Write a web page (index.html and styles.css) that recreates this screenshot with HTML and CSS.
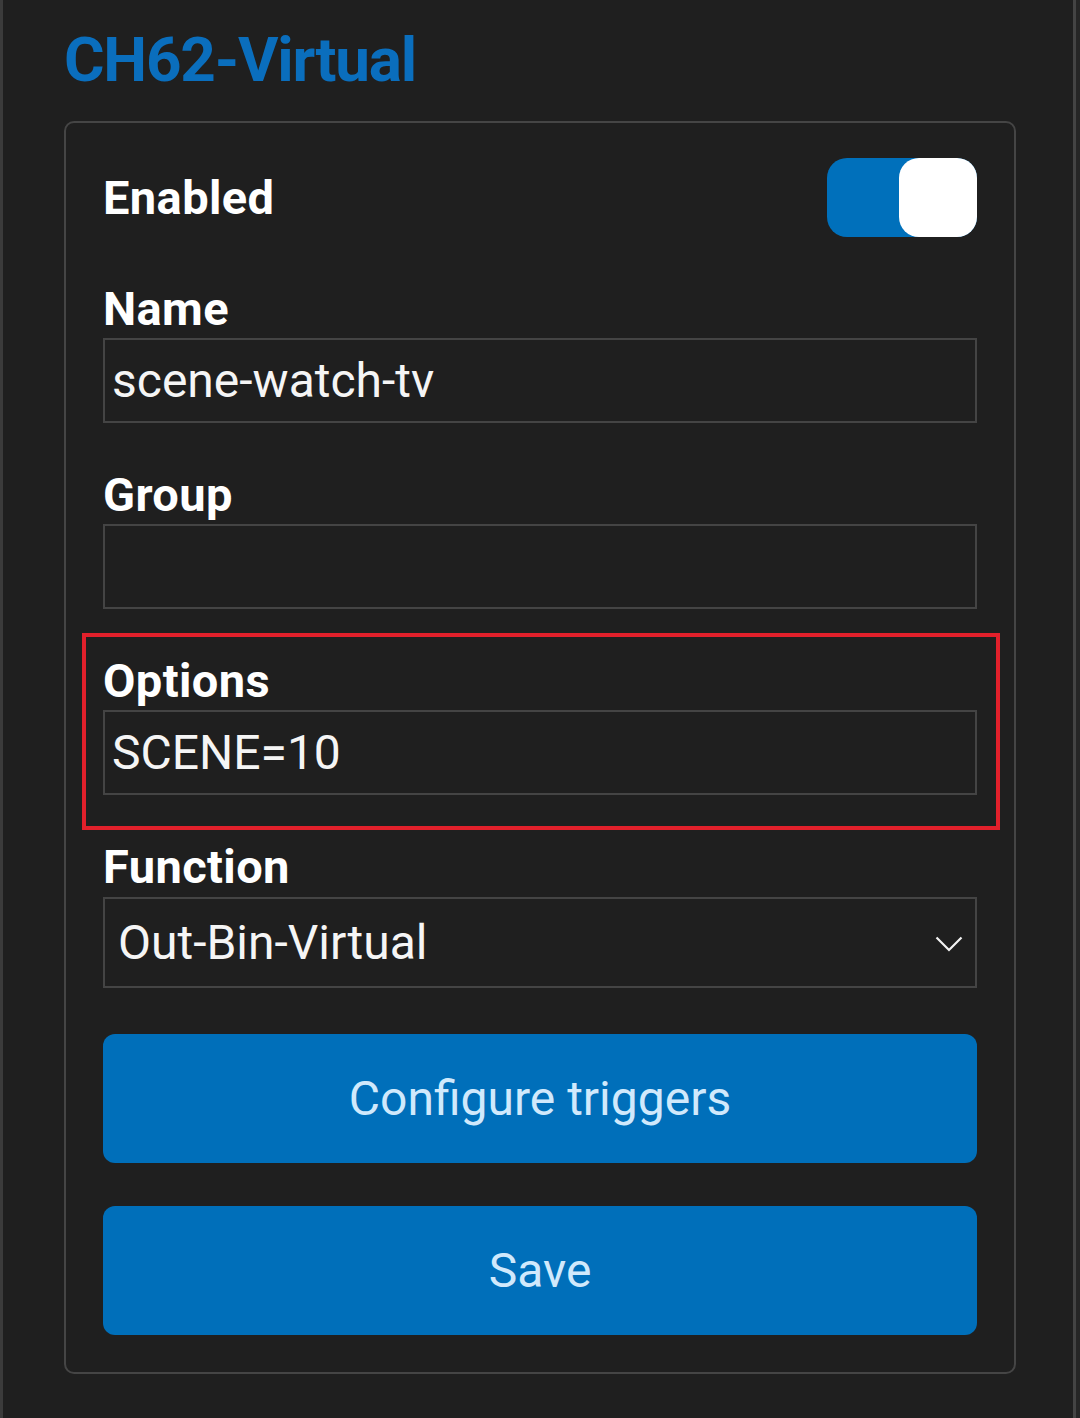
FILE: index.html
```html
<!DOCTYPE html>
<html>
<head>
    <title>CH62-Virtual</title>
    <meta charset="utf-8">
    <link rel="stylesheet" href="styles.css">
</head>
<body>
    <div class="page">
        <h1 class="title">CH62-Virtual</h1>
        <form class="card" action="/channel" method="post">
            <div class="switch-row">
                <span class="label">Enabled</span>
                <div class="switch">
                    <span class="knob"></span>
                </div>
            </div>
            <div class="field">
                <label class="label" for="name">Name</label>
                <input class="text-input" id="name" name="name" value="scene-watch-tv">
            </div>
            <div class="field">
                <label class="label" for="group">Group</label>
                <input class="text-input" id="group" name="group" value="">
            </div>
            <div class="field marked">
                <label class="label" for="options">Options</label>
                <input class="text-input" id="options" name="options" value="SCENE=10">
            </div>
            <div class="field">
                <label class="label">Function</label>
                <div class="select">
                    <span>Out-Bin-Virtual</span>
                    <svg class="chevron" width="28" height="16" viewBox="0 0 28 16">
                        <polyline points="1.5,1.5 14,14 26.5,1.5" fill="none" stroke="#f2f2f2" stroke-width="2.2"/>
                    </svg>
                </div>
            </div>
            <button type="button" class="btn btn-first">Configure triggers</button>
            <button type="submit" class="btn">Save</button>
        </form>
    </div>
</body>
</html>
```

FILE: styles.css
```css
html {
    background: #262626;
}
body {
    margin: 0;
    width: 1076px;
    min-height: 1418px;
    box-sizing: border-box;
    background: #1f1f1f;
    border-left: 3px solid #3b3b3b;
    border-right: 3px solid #444444;
    font-family: Roboto, "Liberation Sans", sans-serif;
    color: #ffffff;
}
.page {
    padding: 24px 0 0 61px;
}
.title {
    margin: 0;
    font-size: 62px;
    font-weight: 700;
    line-height: 72px;
    letter-spacing: -1.2px;
    color: #0a6ebd;
}
.card {
    margin-top: 25px;
    width: 952px;
    box-sizing: border-box;
    border: 2px solid #454545;
    border-radius: 10px;
    padding: 35px 37px 37px;
    display: flex;
    flex-direction: column;
}
.label {
    display: block;
    font-size: 47px;
    font-weight: 700;
    line-height: 50px;
    letter-spacing: 0.4px;
    color: #ffffff;
}
.switch-row {
    display: flex;
    justify-content: space-between;
    align-items: center;
    height: 79px;
}
.switch {
    width: 150px;
    height: 79px;
    border-radius: 20px;
    background: #0070bb;
    display: flex;
    justify-content: flex-end;
}
.knob {
    width: 78px;
    height: 79px;
    border-radius: 20px;
    background: #ffffff;
}
.field {
    margin-top: 47px;
    display: flex;
    flex-direction: column;
    gap: 4px;
}
.text-input {
    width: 100%;
    height: 85px;
    box-sizing: border-box;
    border: 2px solid #444444;
    border-radius: 0;
    background: transparent;
    padding: 0 7px;
    font-family: Roboto, "Liberation Sans", sans-serif;
    font-size: 48px;
    color: #f5f5f5;
    outline: none;
}
/* red frame drawn round the options field */
.marked {
    position: relative;
}
.marked::after {
    content: "";
    position: absolute;
    top: -23px;
    bottom: -35px;
    left: -21px;
    right: -23px;
    border: 4px solid #e2202b;
    pointer-events: none;
}
.select {
    height: 91px;
    margin-top: 1px;
    box-sizing: border-box;
    border: 2px solid #444444;
    padding: 0 12px 0 13px;
    display: flex;
    align-items: center;
    justify-content: space-between;
    font-size: 48px;
    color: #f5f5f5;
}
.chevron {
    margin-top: 2px;
}
.btn {
    height: 129px;
    margin-top: 43px;
    border: none;
    border-radius: 12px;
    background: #006fba;
    color: #d0e9fc;
    font-family: Roboto, "Liberation Sans", sans-serif;
    font-size: 48px;
    cursor: pointer;
}
.btn-first {
    margin-top: 46px;
}
```
